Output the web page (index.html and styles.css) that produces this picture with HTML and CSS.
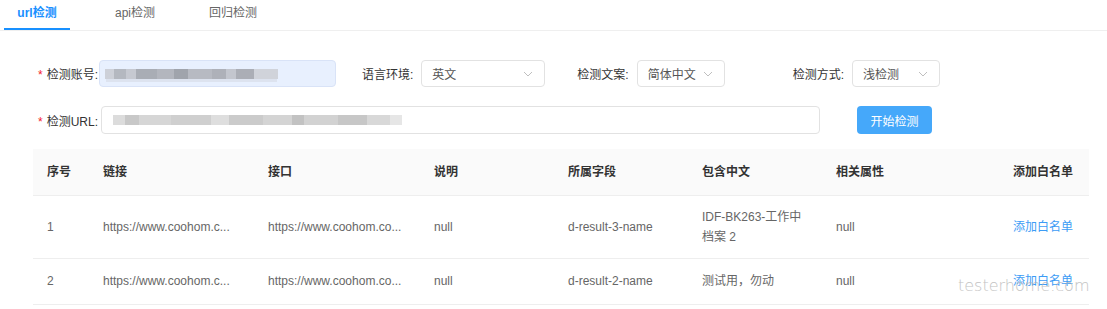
FILE: index.html
```html
<!DOCTYPE html>
<html lang="zh-CN">
<head>
  <meta charset="UTF-8" />
  <meta name="viewport" content="width=device-width, initial-scale=1" />
  <title>url检测</title>
  <link rel="stylesheet" href="styles.css">
</head>
<body>
  <div class="tabs">
    <div class="tab active">url检测</div>
    <div class="tab">api检测</div>
    <div class="tab">回归检测</div>
  </div>

  <div class="form">
    <div class="form-row">
      <label class="label-main"><span class="star">*</span>检测账号:</label>
      <div class="input input-account"><span class="blur blur-account"></span></div>

      <label class="label label-lang">语言环境:</label>
      <div class="select select-lang">英文
        <svg class="chevron" viewBox="0 0 10 6" width="10" height="6"><path d="M1 1l4 4 4-4" fill="none" stroke="#bfbfbf" stroke-width="1"/></svg>
      </div>

      <label class="label label-copy">检测文案:</label>
      <div class="select select-small">简体中文
        <svg class="chevron" viewBox="0 0 10 6" width="10" height="6"><path d="M1 1l4 4 4-4" fill="none" stroke="#bfbfbf" stroke-width="1"/></svg>
      </div>

      <label class="label label-mode">检测方式:</label>
      <div class="select select-small">浅检测
        <svg class="chevron" viewBox="0 0 10 6" width="10" height="6"><path d="M1 1l4 4 4-4" fill="none" stroke="#bfbfbf" stroke-width="1"/></svg>
      </div>
    </div>

    <div class="form-row row-url">
      <label class="label-main"><span class="star">*</span>检测URL:</label>
      <div class="input input-url"><span class="blur blur-url"></span></div>
      <button class="btn-primary">开始检测</button>
    </div>
  </div>

  <table class="result-table">
    <colgroup>
      <col class="c-num">
      <col class="c-link">
      <col class="c-api">
      <col class="c-mid">
      <col class="c-mid">
      <col class="c-mid">
      <col class="c-mid">
      <col>
    </colgroup>
    <thead>
      <tr>
        <th>序号</th>
        <th>链接</th>
        <th>接口</th>
        <th>说明</th>
        <th>所属字段</th>
        <th>包含中文</th>
        <th>相关属性</th>
        <th class="right">添加白名单</th>
      </tr>
    </thead>
    <tbody>
      <tr class="tall">
        <td>1</td>
        <td>https://www.coohom.c...</td>
        <td>https://www.coohom.co...</td>
        <td>null</td>
        <td>d-result-3-name</td>
        <td>IDF-BK263-工作中档案 2</td>
        <td>null</td>
        <td class="right"><a class="link">添加白名单</a></td>
      </tr>
      <tr>
        <td>2</td>
        <td>https://www.coohom.c...</td>
        <td>https://www.coohom.co...</td>
        <td>null</td>
        <td>d-result-2-name</td>
        <td>测试用，勿动</td>
        <td>null</td>
        <td class="right"><a class="link">添加白名单</a></td>
      </tr>
    </tbody>
  </table>

  <div class="watermark">testerhome.com</div>
</body>
</html>
```

FILE: styles.css
```css
*, *::before, *::after {
  box-sizing: border-box;
}

body {
  margin: 0;
  background: #fff;
  font-family: "Liberation Sans", "Noto Sans CJK SC", sans-serif;
  font-size: 12px;
  color: #333;
  position: relative;
  height: 309px;
  overflow: hidden;
}

/* tabs */
.tabs {
  display: flex;
  gap: 32px;
  padding-left: 4px;
  height: 31px;
  border-bottom: 1px solid #efefef;
}

.tab {
  width: 66px;
  height: 30px;
  line-height: 27px;
  text-align: center;
  font-size: 12px;
  color: #666;
}

.tab.active {
  color: #1890ff;
  font-weight: 600;
  border-bottom: 2px solid #1890ff;
}

/* form */
.form {
  padding: 29px 0 0 36px;
}

.form-row {
  display: flex;
  align-items: center;
  height: 27px;
}

.row-url {
  margin-top: 19px;
  height: 28px;
}

.label-main {
  width: 62px;
  text-align: right;
  color: #333;
  white-space: nowrap;
}

.star {
  color: #f5222d;
  margin-right: 4px;
}

.label {
  margin-right: 8px;
  white-space: nowrap;
  color: #333;
}

.label-lang { margin-left: 26px; }
.label-copy { margin-left: 32px; }
.label-mode { margin-left: 68px; }

.input {
  height: 27px;
  border: 1px solid #e2e2e2;
  border-radius: 4px;
  display: flex;
  align-items: center;
}

.input-account {
  margin-left: 1px;
  width: 237px;
  background: #e8f0fe;
  border-color: #d9e3f7;
  padding-left: 5px;
}

.input-url {
  margin-left: 3px;
  width: 719px;
  height: 28px;
  padding-left: 11px;
}

.blur {
  display: block;
  height: 10px;
}

.blur-account {
  width: 173px;
  background: linear-gradient(90deg,
    #cdd0d8 0 5%, #b4b8c0 5% 12%, #c6c9d1 12% 18%, #a9adb5 18% 30%,
    #b3b6be 30% 40%, #a0a4ac 40% 48%, #b7bac2 48% 62%, #aeb1b9 62% 70%,
    #c3c6ce 70% 76%, #abaeb6 76% 86%, #d0d3da 86% 100%);
  box-shadow: 0 4px 0 -1px #dde3ef;
}

.blur-url {
  width: 289px;
  background: linear-gradient(90deg,
    #dcdcdc 0 4%, #c8c8c8 4% 9%, #d6d6d6 9% 20%, #cfcfcf 20% 34%,
    #dedede 34% 40%, #cbcbcb 40% 52%, #d4d4d4 52% 62%, #c2c2c2 62% 66%,
    #d2d2d2 66% 78%, #c7c7c7 78% 88%, #d8d8d8 88% 96%, #e6e6e6 96% 100%);
}

.select {
  height: 27px;
  border: 1px solid #e2e2e2;
  border-radius: 4px;
  display: flex;
  align-items: center;
  justify-content: space-between;
  padding: 0 11px 0 10px;
  color: #555;
}

.select-lang { width: 124px; }
.select-small { width: 88px; }

.chevron {
  display: block;
}

.btn-primary {
  margin-left: 37px;
  width: 75px;
  height: 28px;
  border: none;
  border-radius: 4px;
  background: #45a8fa;
  color: #fff;
  font-family: inherit;
  font-size: 12px;
  padding: 0;
}

/* table */
.result-table {
  margin: 15px 0 0 33px;
  width: 1056px;
  border-collapse: collapse;
  table-layout: fixed;
}

.c-num { width: 56px; }
.c-link { width: 165px; }
.c-api { width: 166px; }
.c-mid { width: 134px; }

.result-table th,
.result-table td {
  text-align: left;
  padding: 0 14px;
  border-bottom: 1px solid #eeeeee;
  line-height: 20px;
}

.result-table th {
  height: 46px;
  background: #fafafa;
  font-weight: 600;
  color: #333;
}

.result-table td {
  height: 46px;
  color: #666;
}

.result-table tr.tall td {
  height: 63px;
}

.result-table .right {
  text-align: right;
  padding-right: 16px;
}

.link {
  color: #3d9cf5;
  text-decoration: none;
}

.watermark {
  position: absolute;
  left: 958px;
  top: 276px;
  font-family: "DejaVu Sans", sans-serif;
  font-weight: 200;
  font-size: 16px;
  color: #b4b4b4;
  opacity: 0.8;
}
```
